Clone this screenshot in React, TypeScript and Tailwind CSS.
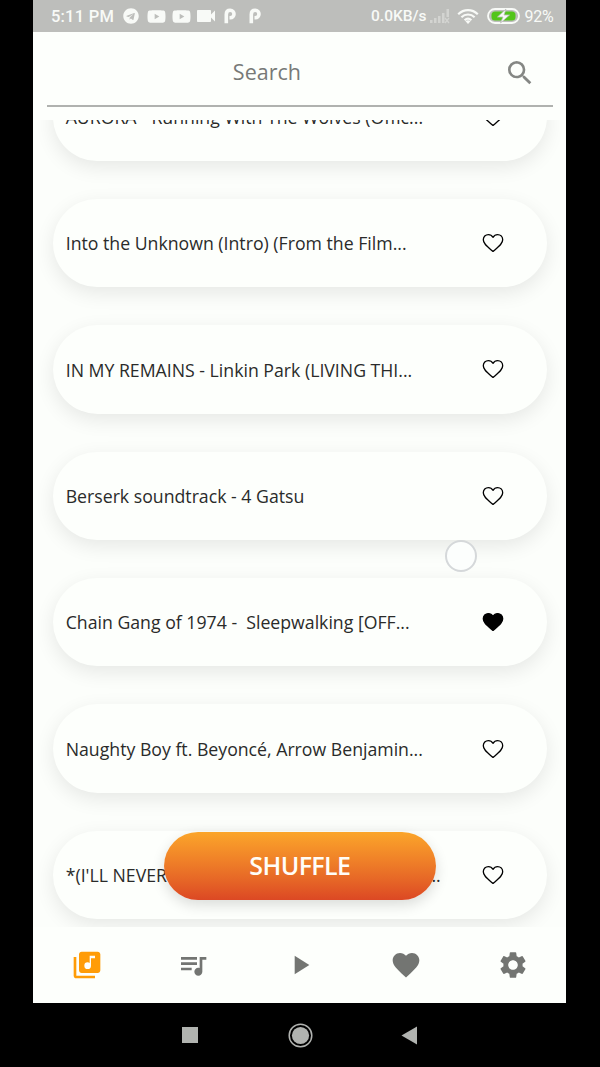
import React from 'react';
import { FaTelegram, FaYoutube } from 'react-icons/fa';
import { MdFavorite, MdLibraryMusic, MdPlayArrow, MdQueueMusic, MdSearch, MdSettings, MdVideocam } from 'react-icons/md';

type Song = { title: string; liked?: boolean; clipped?: boolean };

const songs: Song[] = [
  { title: 'AURORA - Running With The Wolves (Offic...' },
  { title: 'Into the Unknown (Intro) (From the Film...' },
  { title: 'IN MY REMAINS - Linkin Park (LIVING THI...' },
  { title: 'Berserk soundtrack - 4 Gatsu' },
  { title: 'Chain Gang of 1974 -  Sleepwalking [OFF...', liked: true },
  { title: 'Naughty Boy ft. Beyoncé, Arrow Benjamin...' },
  { title: "*(I'LL NEVER BE THE SAME AGAIN)", clipped: true },
];

function Heart({ filled }: { filled?: boolean }) {
  return (
    <svg width="22" height="20" viewBox="0 0 22 20" fill={filled ? '#000' : 'none'} stroke="#000" strokeWidth="1.3" strokeLinejoin="round">
      <path d="M11 4.300C9.900 2.500 8.200 1.600 6.400 1.600C3.500 1.600 1.300 3.800 1.300 6.800C1.300 10.900 5.300 13.600 11 18.400C16.700 13.600 20.700 10.900 20.700 6.800C20.700 3.800 18.500 1.600 15.600 1.600C13.800 1.600 12.100 2.500 11 4.300Z" />
    </svg>
  );
}

function PMark() {
  return (
    <svg width="12" height="16" viewBox="0 0 12 16" fill="none">
      <path d="M2.300 15.300V6.400C2.300 3.800 3.800 2.300 6.200 2.300S10 3.900 10 6.100S8.400 9.800 6.200 9.800H5.500" stroke="#f8faf7" strokeWidth="3.600" />
    </svg>
  );
}

function StatusBar() {
  return (
    <div className="flex h-8 shrink-0 items-center justify-between bg-[#bdbebb] pl-[17.500px] pr-[13px] text-[#f8faf7]">
      <div className="flex items-center">
        <span className="w-[64px] whitespace-nowrap pt-[2px] font-[Roboto] text-[16.500px] font-medium tracking-[0.25px]">5:11 PM</span>
        <FaTelegram size={16} className="ml-[8px]" />
        <FaYoutube size={19} className="ml-[8px]" />
        <FaYoutube size={19} className="ml-[6px]" />
        <MdVideocam size={24} className="ml-[3px]" />
        <span className="ml-[6px]"><PMark /></span>
        <span className="ml-[13px]"><PMark /></span>
      </div>
      <div className="flex items-center">
        <span className="whitespace-nowrap pt-[2px] font-[Roboto] text-[15.500px] font-medium">0.0KB/s</span>
        <svg className="ml-[3px]" width="20" height="16" viewBox="0 0 20 16" fill="#d3d4d1">
          <path d="M0 12h2.500v3H0zM4 10h2.500v5H4zM8 8h2.500v7H8zM12 5h2.500v10h-2.500zM16.500 1h2.500v8h-2.500z" />
          <path d="M15 10l4 5M19 10l-4 5" stroke="#d3d4d1" strokeWidth="1.300" />
        </svg>
        <svg className="ml-[7px]" width="22" height="17" viewBox="0 0 22 17" fill="none" stroke="#f8faf7" strokeWidth="2.200">
          <path d="M1.200 6.200C6.800 0.700 15.200 0.700 20.800 6.200M4.400 9.200C8.200 5.600 13.800 5.600 17.600 9.200M7.600 12.200C9.600 10.300 12.400 10.300 14.400 12.200" />
          <path d="M8.500 13.200L11 16L13.500 13.200C12 12 10 12 8.500 13.200Z" fill="#f8faf7" stroke="none" />
        </svg>
        <svg className="ml-[8px]" width="33" height="16" viewBox="0 0 33 16">
          <rect x="1" y="1" width="31" height="14" rx="7" fill="#bdbebb" stroke="#f8faf7" strokeWidth="1.800" />
          <rect x="4.500" y="3.500" width="24" height="9" rx="3.500" fill="#53c51b" />
          <path d="M19 1L10.500 9H16L13.500 15L22.500 7H17Z" fill="#f8faf7" stroke="#bdbebb" strokeWidth="0.800" />
        </svg>
        <span className="ml-[5px] pt-[2px] font-[Roboto] text-[16px] tracking-[-0.3px]">92%</span>
      </div>
    </div>
  );
}

function SongCard({ song }: { song: Song }) {
  return (
    <div className="flex h-[88.400px] shrink-0 items-center justify-between rounded-full bg-[#fdfffc] pl-[13px] pr-[43px] shadow-[0_6px_20px_rgba(0,0,0,0.09)]">
      <span className={`flex whitespace-pre pt-px text-[17.700px] text-[#2a2b2a] ${song.clipped ? 'w-[375px] justify-between' : ''}`}>
        {song.title}
        {song.clipped && <span>...</span>}
      </span>
      <Heart filled={song.liked} />
    </div>
  );
}

export default function App() {
  return (
    <div className="h-[1067px] w-[600px] overflow-hidden bg-black pl-[33.400px] font-['Open_Sans',sans-serif]">
      <div className="flex h-[1002.500px] w-[533px] flex-col bg-[#fdfffc]">
        <StatusBar />
        <header className="h-[87.500px] shrink-0 px-[13.500px]">
          <div className="flex h-[74.500px] items-center justify-end border-b-2 border-[#b0b2af] pt-[7.500px]">
            <span className="flex-1 pr-[17px] pt-px text-center text-[21.500px] text-[#777977]">Search</span>
            <MdSearch size={32} className="mr-[17px] mt-[2px] text-[#858784]" />
          </div>
        </header>

        <main className="relative h-[807.500px] shrink-0 overflow-hidden bg-[#fcfefb]">
          <div className="-mt-[47px] flex flex-col gap-[38px] px-[19.300px]">
            {songs.map((song) => <SongCard key={song.title} song={song} />)}
          </div>
          <div className="absolute left-[412px] top-[420.500px] h-8 w-8 rounded-full border-2 border-[#d5d8da] bg-[#fcfefd]" />
          <button className="absolute left-[131px] top-[712px] flex h-[68px] w-[272px] items-center justify-center rounded-full bg-linear-to-b from-[#fba52a] to-[#dc4824] pr-[1px] pt-px text-[25px] font-semibold tracking-[-0.6px] text-[#fffdf8] shadow-[0_5px_14px_rgba(0,0,0,0.14)]">
            SHUFFLE
          </button>
        </main>

        <nav className="grid flex-1 grid-cols-5 place-items-center text-[#737572]">
          <MdLibraryMusic size={32} className="text-[#ff9c07]" />
          <MdQueueMusic size={32} />
          <MdPlayArrow size={32} />
          <MdFavorite size={32} />
          <MdSettings size={32} />
        </nav>
      </div>

      <div className="flex h-[65px] items-center pl-[148.300px] text-[#b1b3b0]">
        <div className="h-4 w-4 bg-[#b1b3b0]" />
        <svg className="ml-[90px]" width="25" height="25" viewBox="0 0 25 25">
          <circle cx="12.500" cy="12.500" r="11.300" fill="none" stroke="#b1b3b0" strokeWidth="1.500" />
          <circle cx="12.500" cy="12.500" r="8.600" fill="#b1b3b0" />
        </svg>
        <svg className="ml-[88px]" width="17" height="19" viewBox="0 0 17 19" fill="#b1b3b0">
          <path d="M0.500 9.500L16 0.500V18.500Z" />
        </svg>
      </div>
    </div>
  );
}
